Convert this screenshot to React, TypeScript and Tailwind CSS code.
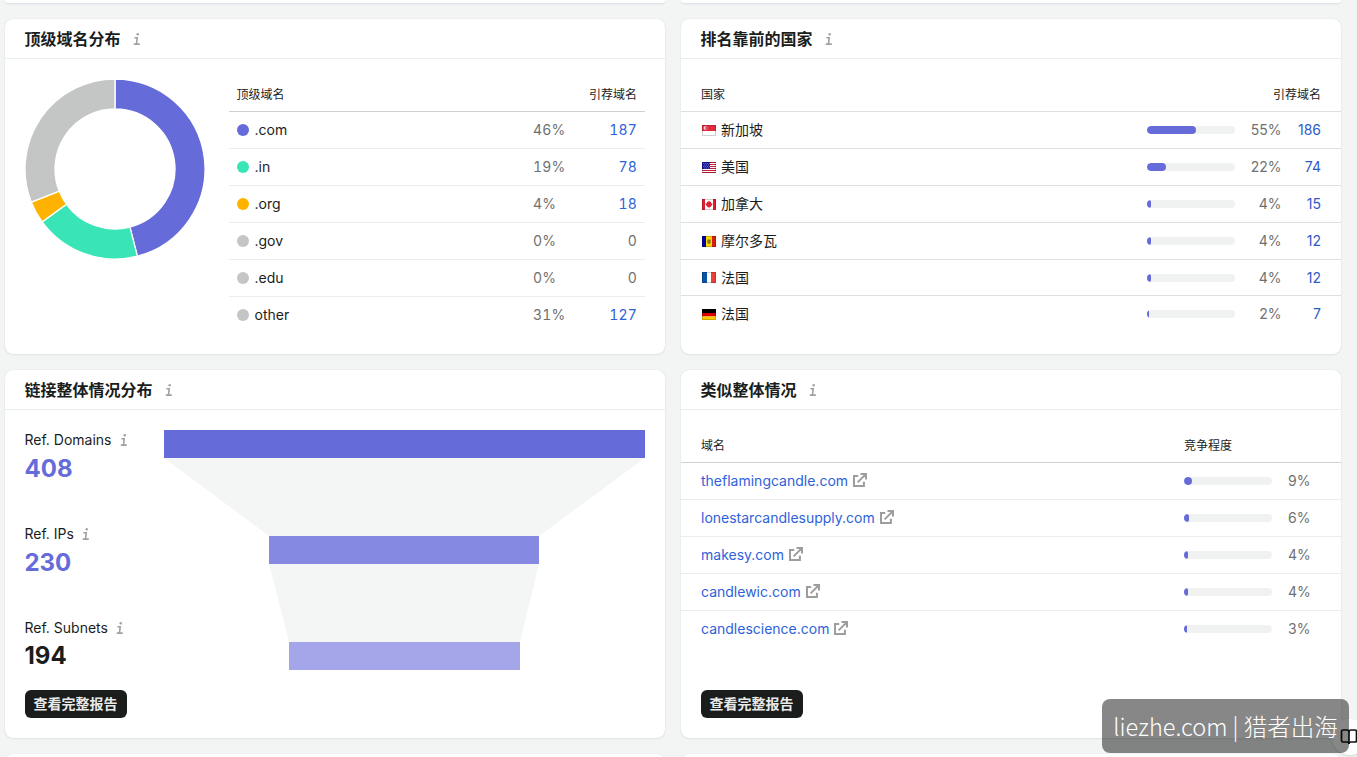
import React from "react";
import { clsx } from "clsx";

const domains = [
  { name: ".com", percent: 46, count: 187, dot: "bg-[#666bda]" },
  { name: ".in", percent: 19, count: 78, dot: "bg-[#39e5b6]" },
  { name: ".org", percent: 4, count: 18, dot: "bg-[#ffb300]" },
  { name: ".gov", percent: 0, count: 0, dot: "bg-[#c4c5c5]" },
  { name: ".edu", percent: 0, count: 0, dot: "bg-[#c4c5c5]" },
  { name: "other", percent: 31, count: 127, dot: "bg-[#c4c5c5]" },
];

const countries = [
  { name: "新加坡", flag: "sg", percent: 55, bar: 49, count: 186 },
  { name: "美国", flag: "us", percent: 22, bar: 19, count: 74 },
  { name: "加拿大", flag: "ca", percent: 4, bar: 4, count: 15 },
  { name: "摩尔多瓦", flag: "md", percent: 4, bar: 4, count: 12 },
  { name: "法国", flag: "fr", percent: 4, bar: 4, count: 12 },
  { name: "法国", flag: "de", percent: 2, bar: 2, count: 7 },
];

const competitors = [
  { name: "theflamingcandle.com", percent: 9, bar: 8 },
  { name: "lonestarcandlesupply.com", percent: 6, bar: 5 },
  { name: "makesy.com", percent: 4, bar: 4 },
  { name: "candlewic.com", percent: 4, bar: 4 },
  { name: "candlescience.com", percent: 3, bar: 3 },
];

const refs = [
  { label: "Ref. Domains", value: 408 },
  { label: "Ref. IPs", value: 230 },
  { label: "Ref. Subnets", value: 194 },
];

const slices = [
  { value: 46, color: "#666bda" },
  { value: 19, color: "#39e5b6" },
  { value: 4, color: "#ffb300" },
  { value: 31, color: "#c4c5c5" },
];

function InfoIcon() {
  return (
    <svg width="8" height="12" viewBox="0 0 8 12" fill="none" className="shrink-0">
      <circle cx="4.700" cy="1.300" r="1.200" fill="#a0a1a1" />
      <path d="M1.400 4.700H4.200L3.500 10.900M.8 11.100H6.800" stroke="#a0a1a1" strokeWidth="1.600" />
    </svg>
  );
}

function ExternalIcon() {
  return (
    <svg width="14" height="14" viewBox="0 0 14 14" fill="none" className="relative -top-px">
      <path
        d="M5.200 3.100H1V13H10.900V8.800M4.600 9.400L12.600 1.400M7.500 1H13V6.500"
        stroke="#9c9d9d"
        strokeWidth="2"
      />
    </svg>
  );
}

function Flag({ code }: { code: string }) {
  return (
    <svg width="14" height="11" viewBox="0 0 14 11">
      {code === "sg" && (
        <>
          <path fill="#fff" d="M0 0h14v11H0z" />
          <path fill="#e32b40" d="M0 0h14v6H0z" />
          <circle cx="3.400" cy="3" r="1.800" fill="#fff" />
          <circle cx="4.300" cy="3" r="1.600" fill="#e8576a" />
        </>
      )}
      {code === "us" && (
        <>
          <path fill="#fff" d="M0 0h14v11H0z" />
          <path stroke="#c41e3a" d="M0 .5h14M0 2.500h14M0 4.500h14M0 6.500h14M0 8.500h14M0 10.500h14" />
          <path fill="#1a1a9c" d="M0 0h8v7H0z" />
          <path
            stroke="#b9b9e6"
            strokeWidth="0.700"
            strokeDasharray="0.700 1.300"
            d="M1 1.500h7M2 3h6M1 4.500h7M2 6h6"
          />
        </>
      )}
      {code === "ca" && (
        <>
          <path fill="#fff" d="M0 0h14v11H0z" />
          <path fill="#e02030" d="M0 0h3v11H0zM11 0h3v11h-3z" />
          <path
            fill="#e02030"
            d="M7 1.500l1 1.500 1-.3v1.500l1.600.2-.6 1.600L8.500 8H7.400v1.300h-.8V8H5.500L4 6l-.6-1.600L5 4.200V2.700l1 .3z"
          />
        </>
      )}
      {code === "md" && (
        <>
          <path fill="#0000a8" d="M0 0h4v11H0z" />
          <path fill="#ffd800" d="M4 0h6v11H4z" />
          <path fill="#d32011" d="M10 0h4v11h-4z" />
          <path fill="#8f741c" d="M5.300 3.500h3.400v3L7 8.500l-1.700-2z" />
        </>
      )}
      {code === "fr" && (
        <>
          <path fill="#0a53a5" d="M0 0h5v11H0z" />
          <path fill="#fff" d="M5 0h4v11H5z" />
          <path fill="#ea4238" d="M9 0h5v11H9z" />
        </>
      )}
      {code === "de" && (
        <>
          <path fill="#000" d="M0 0h14v4H0z" />
          <path fill="#dd0000" d="M0 4h14v3.500H0z" />
          <path fill="#ffce00" d="M0 7.500h14V11H0z" />
        </>
      )}
      <path fill="none" stroke="#000" strokeOpacity="0.180" d="M.5.5h13v10H.5z" />
    </svg>
  );
}

function Card({
  title,
  className,
  children,
}: {
  title: string;
  className?: string;
  children: React.ReactNode;
}) {
  return (
    <section
      className={clsx(
        "bg-white rounded-lg shadow-[0_0_1px_rgba(25,59,103,0.2),0_1px_2px_rgba(25,59,103,0.08)]",
        className
      )}
    >
      <h2 className="flex h-10 items-center gap-[12.5px] border-b border-[#ebecec] px-[19.5px] text-base font-bold">
        {title}
        <InfoIcon />
      </h2>
      {children}
    </section>
  );
}

function Bar({ width }: { width: number }) {
  return (
    <div className="h-2 w-[88px] overflow-hidden rounded-full bg-[#f0f2f2]">
      <div className="h-full rounded-full bg-[#666bda]" style={{ width }} />
    </div>
  );
}

function Donut() {
  let angle = 0;
  const point = (turn: number, r: number) =>
    `${90 + r * Math.sin(turn * 2 * Math.PI)} ${90 - r * Math.cos(turn * 2 * Math.PI)}`;

  return (
    <svg width="180" height="180" viewBox="0 0 180 180" className="shrink-0">
      {slices.map(({ value, color }) => {
        const start = angle;
        const end = angle + value / 100;
        angle = end;
        return (
          <path
            key={color}
            d={`M${point(start, 90)}A90 90 0 0 1 ${point(end, 90)}L${point(end, 60)}A60 60 0 0 0 ${point(start, 60)}Z`}
            fill={color}
            stroke="#fff"
            strokeWidth="1.300"
          />
        );
      })}
    </svg>
  );
}

function Funnel() {
  return (
    <svg width="481" height="240" viewBox="0 0 481 240">
      <path d="M0 28H481L375 106H105ZM105 134H375L356 212H125Z" fill="#f4f6f5" />
      <path d="M0 0h481v28H0z" fill="#666bda" />
      <path d="M105 106h270v28H105z" fill="#8589e2" />
      <path d="M125 212h231v28H125z" fill="#a4a6e9" />
    </svg>
  );
}

function ReportButton() {
  return (
    <button className="flex h-7 w-[102px] items-center justify-center rounded-md bg-[#1b1d1c] pr-px text-sm font-bold text-[#e8eaea]">
      查看完整报告
    </button>
  );
}

export default function App() {
  return (
    <div className="relative h-[757px] w-[1357px] overflow-hidden bg-[#f3f5f5] font-['Inter','Noto_Sans_CJK_SC',sans-serif] text-[#1b1d1c]">
      <div className="ml-[5px] grid grid-cols-[660px_660px] gap-4">
        <div className="h-[3px] rounded-b-lg bg-white shadow-[0_1px_2px_rgba(25,59,103,0.12)]" />
        <div className="h-[3px] rounded-b-lg bg-white shadow-[0_1px_2px_rgba(25,59,103,0.12)]" />

        <Card title="顶级域名分布" className="h-[335px]">
          <div className="flex gap-6 px-5 pt-5">
            <Donut />
            <div className="w-[416px] text-sm">
              <div className="flex h-[33px] justify-between border-b border-[#d0d2d2] pt-2 pr-2 pl-[7.5px] text-xs">
                <span>顶级域名</span>
                <span>引荐域名</span>
              </div>
              {domains.map(({ name, percent, count, dot }) => (
                <div
                  key={name}
                  className="flex h-[37px] items-center border-b border-[#ebecec] px-2 last:h-9 last:border-b-0"
                >
                  <span className={clsx("mr-[5.5px] size-3 rounded-full", dot)} />
                  <span className="w-[278.5px]">{name}</span>
                  <span className="tracking-[0.200px] text-[#6f7171] tabular-nums">{percent}%</span>
                  <span
                    className={clsx(
                      "ml-auto tracking-[0.200px] tabular-nums",
                      count ? "text-[#2f62d9]" : "text-[#6f7171]"
                    )}
                  >
                    {count}
                  </span>
                </div>
              ))}
            </div>
          </div>
        </Card>

        <Card title="排名靠前的国家" className="h-[335px]">
          <div className="pt-5 text-sm">
            <div className="flex h-[33px] justify-between border-b border-[#dcdfe3] px-5 pt-2 text-xs">
              <span>国家</span>
              <span>引荐域名</span>
            </div>
            {countries.map(({ name, flag, percent, bar, count }) => (
              <div
                key={flag}
                className={clsx(
                  "flex items-center border-b border-[#dcdfe3] px-5 last:border-b-0",
                  flag === "fr" || flag === "de" ? "h-9" : "h-[37px]"
                )}
              >
                <span className="mr-[5px] ml-px">
                  <Flag code={flag} />
                </span>
                <span className="flex-1">{name}</span>
                <Bar width={bar} />
                <span className="w-[46.500px] text-right text-[#6f7171]">{percent}%</span>
                <span className="w-[39.500px] text-right text-[#2f5bc9]">{count}</span>
              </div>
            ))}
          </div>
        </Card>

        <Card title="链接整体情况分布" className="h-[368px]">
          <div className="flex pt-5 pr-5 pl-[19.5px]">
            <div className="w-[139.5px] shrink-0">
              <div className="flex flex-col gap-[38px]">
                {refs.map(({ label, value }, index) => (
                  <div key={label} className="h-14">
                    <div className="flex items-center gap-2 text-sm">
                      {label}
                      <InfoIcon />
                    </div>
                    <div
                      className={clsx(
                        "text-2xl font-bold",
                        index < 2 ? "leading-[38px] text-[#666bda]" : "leading-9"
                      )}
                    >
                      {value}
                    </div>
                  </div>
                ))}
              </div>
              <div className="mt-4 pl-[0.5px]">
                <ReportButton />
              </div>
            </div>
            <Funnel />
          </div>
        </Card>

        <Card title="类似整体情况" className="flex h-[368px] flex-col">
          <div className="pt-5 text-sm">
            <div className="flex h-[33px] border-b border-[#d0d2d2] px-5 pt-2 text-xs">
              <span className="w-[483px]">域名</span>
              <span>竞争程度</span>
            </div>
            {competitors.map(({ name, percent, bar }) => (
              <div
                key={name}
                className="flex h-[37px] items-center border-b border-[#ebecec] px-5 last:h-9 last:border-b-0"
              >
                <a className="flex w-[483px] items-center gap-[5px] text-[#2f62d9]">
                  {name}
                  <ExternalIcon />
                </a>
                <Bar width={bar} />
                <span className="ml-4 text-[#6f7171]">{percent}%</span>
              </div>
            ))}
          </div>
          <div className="mt-auto px-5 pb-5">
            <ReportButton />
          </div>
        </Card>

        <div className="h-10 rounded-t-lg bg-white shadow-[0_0_1px_rgba(25,59,103,0.2)]" />
        <div className="h-10 rounded-t-lg bg-white shadow-[0_0_1px_rgba(25,59,103,0.2)]" />
      </div>

      <div className="absolute top-[719px] left-[1332px] flex size-[36px] items-center rounded-full bg-white pl-2 shadow">
        <svg
          width="18"
          height="18"
          viewBox="0 0 18 18"
          fill="none"
          stroke="#111"
          strokeWidth="1.700"
          className="shrink-0"
        >
          <path d="M9 4Q9 2 7 2H3Q1.500 2 1.500 3.500V12.500Q1.500 14 3 14H7Q9 14 9 16Q9 14 11 14H15Q16.500 14 16.500 12.500V3.500Q16.500 2 15 2H11Q9 2 9 4V16" />
        </svg>
      </div>
      <div className="absolute top-[699px] left-[1102px] flex h-[54px] w-[247px] items-center justify-center rounded-lg bg-black/47 pt-0.5 font-['Noto_Sans_CJK_SC',sans-serif] text-[23.500px] font-light whitespace-nowrap text-white">
        liezhe.com | 猎者出海
      </div>
    </div>
  );
}
